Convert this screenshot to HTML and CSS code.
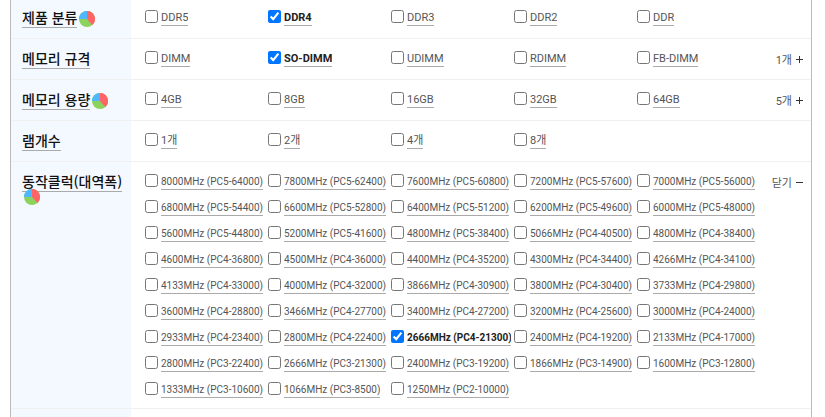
FILE: index.html
```
<!DOCTYPE html>
<html lang="ko">
<head>
  <meta charset="UTF-8">
  <meta name="viewport" content="width=device-width, initial-scale=1.0">
  <title>메모리 상세검색</title>
  <link rel="stylesheet" href="styles.css">
</head>
<body>
  <svg class="sprite" aria-hidden="true">
    <symbol id="pie" viewBox="0 0 16 16">
      <circle cx="8" cy="8" r="8" fill="#8bd35c"/>
      <path d="M8 8V0A8 8 0 0 1 13.4 13.9Z" fill="#ff6467"/>
      <path d="M8 8H0A8 8 0 0 1 8 0Z" fill="#4db8ff"/>
    </symbol>
  </svg>

  <div class="filter">
    <div class="row">
      <div class="title"><a href="#">제품 분류</a><svg class="pie"><use href="#pie"/></svg></div>
      <div class="options">
        <label><input type="checkbox"><span>DDR5</span></label>
        <label><input type="checkbox" checked><span>DDR4</span></label>
        <label><input type="checkbox"><span>DDR3</span></label>
        <label><input type="checkbox"><span>DDR2</span></label>
        <label><input type="checkbox"><span>DDR</span></label>
      </div>
    </div>

    <div class="row">
      <div class="title"><a href="#">메모리 규격</a></div>
      <div class="options">
        <label><input type="checkbox"><span>DIMM</span></label>
        <label><input type="checkbox" checked><span>SO-DIMM</span></label>
        <label><input type="checkbox"><span>UDIMM</span></label>
        <label><input type="checkbox"><span>RDIMM</span></label>
        <label><input type="checkbox"><span>FB-DIMM</span></label>
      </div>
      <button type="button" class="more">1개<i class="plus"></i></button>
    </div>

    <div class="row">
      <div class="title"><a href="#">메모리 용량</a><svg class="pie"><use href="#pie"/></svg></div>
      <div class="options">
        <label><input type="checkbox"><span>4GB</span></label>
        <label><input type="checkbox"><span>8GB</span></label>
        <label><input type="checkbox"><span>16GB</span></label>
        <label><input type="checkbox"><span>32GB</span></label>
        <label><input type="checkbox"><span>64GB</span></label>
      </div>
      <button type="button" class="more">5개<i class="plus"></i></button>
    </div>

    <div class="row">
      <div class="title"><a href="#">램개수</a></div>
      <div class="options">
        <label><input type="checkbox"><span>1개</span></label>
        <label><input type="checkbox"><span>2개</span></label>
        <label><input type="checkbox"><span>4개</span></label>
        <label><input type="checkbox"><span>8개</span></label>
      </div>
    </div>

    <div class="row">
      <div class="title"><a href="#">동작클럭(대역폭)</a><svg class="pie"><use href="#pie"/></svg></div>
      <div class="options clock">
        <label><input type="checkbox"><span>8000MHz (PC5-64000)</span></label>
        <label><input type="checkbox"><span>7800MHz (PC5-62400)</span></label>
        <label><input type="checkbox"><span>7600MHz (PC5-60800)</span></label>
        <label><input type="checkbox"><span>7200MHz (PC5-57600)</span></label>
        <label><input type="checkbox"><span>7000MHz (PC5-56000)</span></label>
        <label><input type="checkbox"><span>6800MHz (PC5-54400)</span></label>
        <label><input type="checkbox"><span>6600MHz (PC5-52800)</span></label>
        <label><input type="checkbox"><span>6400MHz (PC5-51200)</span></label>
        <label><input type="checkbox"><span>6200MHz (PC5-49600)</span></label>
        <label><input type="checkbox"><span>6000MHz (PC5-48000)</span></label>
        <label><input type="checkbox"><span>5600MHz (PC5-44800)</span></label>
        <label><input type="checkbox"><span>5200MHz (PC5-41600)</span></label>
        <label><input type="checkbox"><span>4800MHz (PC5-38400)</span></label>
        <label><input type="checkbox"><span>5066MHz (PC4-40500)</span></label>
        <label><input type="checkbox"><span>4800MHz (PC4-38400)</span></label>
        <label><input type="checkbox"><span>4600MHz (PC4-36800)</span></label>
        <label><input type="checkbox"><span>4500MHz (PC4-36000)</span></label>
        <label><input type="checkbox"><span>4400MHz (PC4-35200)</span></label>
        <label><input type="checkbox"><span>4300MHz (PC4-34400)</span></label>
        <label><input type="checkbox"><span>4266MHz (PC4-34100)</span></label>
        <label><input type="checkbox"><span>4133MHz (PC4-33000)</span></label>
        <label><input type="checkbox"><span>4000MHz (PC4-32000)</span></label>
        <label><input type="checkbox"><span>3866MHz (PC4-30900)</span></label>
        <label><input type="checkbox"><span>3800MHz (PC4-30400)</span></label>
        <label><input type="checkbox"><span>3733MHz (PC4-29800)</span></label>
        <label><input type="checkbox"><span>3600MHz (PC4-28800)</span></label>
        <label><input type="checkbox"><span>3466MHz (PC4-27700)</span></label>
        <label><input type="checkbox"><span>3400MHz (PC4-27200)</span></label>
        <label><input type="checkbox"><span>3200MHz (PC4-25600)</span></label>
        <label><input type="checkbox"><span>3000MHz (PC4-24000)</span></label>
        <label><input type="checkbox"><span>2933MHz (PC4-23400)</span></label>
        <label><input type="checkbox"><span>2800MHz (PC4-22400)</span></label>
        <label><input type="checkbox" checked><span>2666MHz (PC4-21300)</span></label>
        <label><input type="checkbox"><span>2400MHz (PC4-19200)</span></label>
        <label><input type="checkbox"><span>2133MHz (PC4-17000)</span></label>
        <label><input type="checkbox"><span>2800MHz (PC3-22400)</span></label>
        <label><input type="checkbox"><span>2666MHz (PC3-21300)</span></label>
        <label><input type="checkbox"><span>2400MHz (PC3-19200)</span></label>
        <label><input type="checkbox"><span>1866MHz (PC3-14900)</span></label>
        <label><input type="checkbox"><span>1600MHz (PC3-12800)</span></label>
        <label><input type="checkbox"><span>1333MHz (PC3-10600)</span></label>
        <label><input type="checkbox"><span>1066MHz (PC3-8500)</span></label>
        <label><input type="checkbox"><span>1250MHz (PC2-10000)</span></label>
      </div>
      <button type="button" class="more">닫기<i class="minus"></i></button>
    </div>

    <div class="row rest">
      <div class="title"></div>
    </div>
  </div>
</body>
</html>
```
FILE: styles.css
```
* {
  box-sizing: border-box;
}

body {
  margin: 0;
  overflow: hidden;
  background: #fff;
  color: #555;
  font-family: Roboto, "Noto Sans CJK KR", sans-serif;
  font-size: 11px;
}

.sprite {
  position: absolute;
  width: 0;
  height: 0;
}

.filter {
  display: flex;
  flex-direction: column;
  min-height: calc(100vh + 2px);
  margin: -2px 13px 0 10px;
  border-left: 1px solid #bbb;
  border-right: 1px solid #bbb;
}

.row {
  display: grid;
  grid-template-columns: 120px 1fr 51px;
  min-height: 41px;
  border-bottom: 1px solid #f0f0f0;
}

.rest {
  flex: 1;
  min-height: 0;
  border-bottom: 0;
}

/* left column */
.title {
  display: flex;
  flex-wrap: wrap;
  align-items: flex-start;
  align-content: flex-start;
  padding: 10px 0 0 11px;
  background: #f4f8ff;
}

.rest .title {
  padding: 0;
}

.title a {
  height: 20px;
  margin-bottom: -6px;
  border-bottom: 1px solid #aaa;
  color: #111;
  font: 500 14px/18px "Noto Sans CJK KR", sans-serif;
  text-decoration: none;
}

.pie {
  width: 16px;
  height: 16px;
  margin: 3px 0 0 2px;
}

/* checkboxes */
.options {
  display: grid;
  grid-template-columns: repeat(auto-fill, 123px);
  align-content: start;
  padding: 6px 0 6px 14px;
}

.options label {
  display: flex;
  align-items: flex-start;
  height: 26px;
  padding-top: 6px;
}

.options input {
  flex: none;
  width: 13px;
  height: 13px;
  margin: 0 3px 0 0;
  accent-color: #0075ff;
}

.options span {
  max-width: 104px;
  height: 16px;
  overflow: hidden;
  border-bottom: 1px solid #aaa;
  line-height: 15px;
  white-space: nowrap;
}

.options input:checked + span {
  color: #222;
  font-weight: bold;
}

.clock {
  font-size: 10px;
}

/* open / close button */
.more {
  display: flex;
  align-items: center;
  justify-content: flex-end;
  gap: 4px;
  height: 20px;
  margin-top: 10px;
  padding: 0 8px 0 0;
  border: 0;
  background: none;
  color: #555;
  font: inherit;
  white-space: nowrap;
  cursor: pointer;
}

.plus,
.minus {
  width: 7px;
  height: 7px;
  background: linear-gradient(#333, #333) center / 7px 1px no-repeat;
}

.plus {
  background: linear-gradient(#333, #333) center / 7px 1px no-repeat,
    linear-gradient(#333, #333) center / 1px 7px no-repeat;
}
```
